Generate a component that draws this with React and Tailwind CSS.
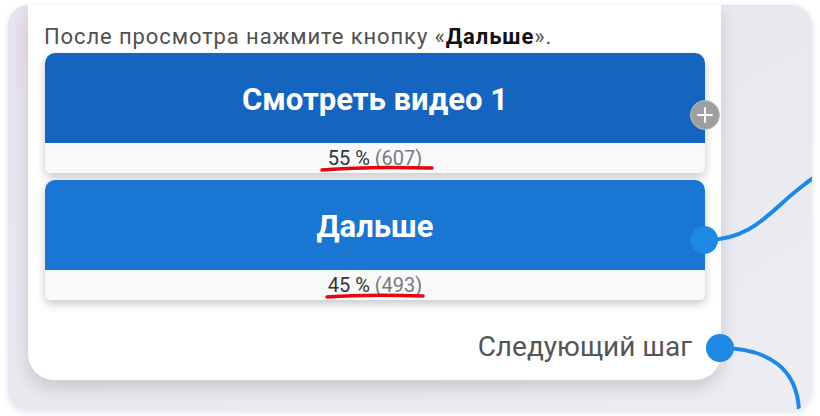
import React from "react";

function VoteButton({ title, percent, count, color, handle, underline }) {
  return (
    <div className="relative rounded-t-[10px] rounded-b-[6px] shadow-[0_4px_10px_rgba(0,0,0,0.22)]">
      <div className={`h-[90px] rounded-t-[10px] flex items-center justify-center ${color}`}>
        <span className="text-white font-bold text-[31px] leading-none pt-[2px]">{title}</span>
      </div>
      <div className="relative h-[30px] rounded-b-[6px] bg-[#f8f9fb] flex items-center justify-center">
        <span className="text-[20px] leading-none">
          <span className="text-[#333]">{percent} %</span>{" "}
          <span className="text-[#7a7a7a]">({count})</span>
        </span>
        <svg className="absolute left-0 top-0" width="660" height="30">
          <path d={underline} fill="none" stroke="#e30613" strokeWidth="3.5" strokeLinecap="round" />
        </svg>
      </div>
      {handle}
    </div>
  );
}

export default function App() {
  return (
    <div className="w-[820px] h-[416px] bg-white pt-[5px] pl-[8px] overflow-hidden" style={{ fontFamily: "Roboto, 'Noto Sans', sans-serif" }}>
      <div className="relative w-[804px] h-[405px] rounded-[20px] overflow-hidden bg-gradient-to-br from-[#e9e2ef] via-[#e8e9ef] to-[#eceef3] shadow-[0_2px_6px_rgba(0,0,0,0.12)]">
        <div className="ml-[20px] w-[693px] h-[375px] bg-white rounded-b-[26px] shadow-[0_8px_18px_rgba(0,0,0,0.14)] pt-[19px] pl-[17px] pr-[16px] flex flex-col">
          <p className="-ml-[1px] text-[22px] leading-[26px] tracking-[0.9px] text-[#505050]">
            После просмотра нажмите кнопку «<b className="text-[#111]">Дальше</b>».
          </p>
          <div className="mt-[3px] flex flex-col gap-[7px]">
            <VoteButton
              title="Смотреть видео 1"
              percent="55"
              count="607"
              color="bg-[#1565c0]"
              underline="M277 27 C310 24, 350 24, 387 25"
              handle={
                <span className="absolute -right-[15px] top-[47px] w-[30px] h-[30px] rounded-full bg-[#9e9e9e] border border-[#bdbdbd] flex items-center justify-center">
                  <svg width="18" height="18" viewBox="0 0 18 18">
                    <path d="M9 2v14M2 9h14" stroke="#fff" strokeWidth="2" strokeLinecap="round" />
                  </svg>
                </span>
              }
            />
            <VoteButton
              title="Дальше"
              percent="45"
              count="493"
              color="bg-[#1976d2]"
              underline="M282 27 C310 25, 345 25, 378 26"
              handle={
                <span className="absolute -right-[13px] top-[46px] w-[28px] h-[28px] rounded-full bg-[#1e88e5]" />
              }
            />
          </div>
          <div className="mt-[31px] pr-[13px] flex items-center justify-end">
            <span className="text-[28px] leading-[32px] text-[#555]">Следующий шаг</span>
          </div>
        </div>
        <svg className="absolute inset-0 pointer-events-none" width="804" height="405" viewBox="8 5 804 405">
          <path d="M703 240 C750 242, 772 210, 795 192 C805 184, 812 178, 825 170" fill="none" stroke="#1e88e5" strokeWidth="4" />
          <path d="M720 348 C770 348, 798 370, 799 412" fill="none" stroke="#1e88e5" strokeWidth="4" />
          <circle cx="720" cy="348" r="14" fill="#1e88e5" />
        </svg>
      </div>
    </div>
  );
}
